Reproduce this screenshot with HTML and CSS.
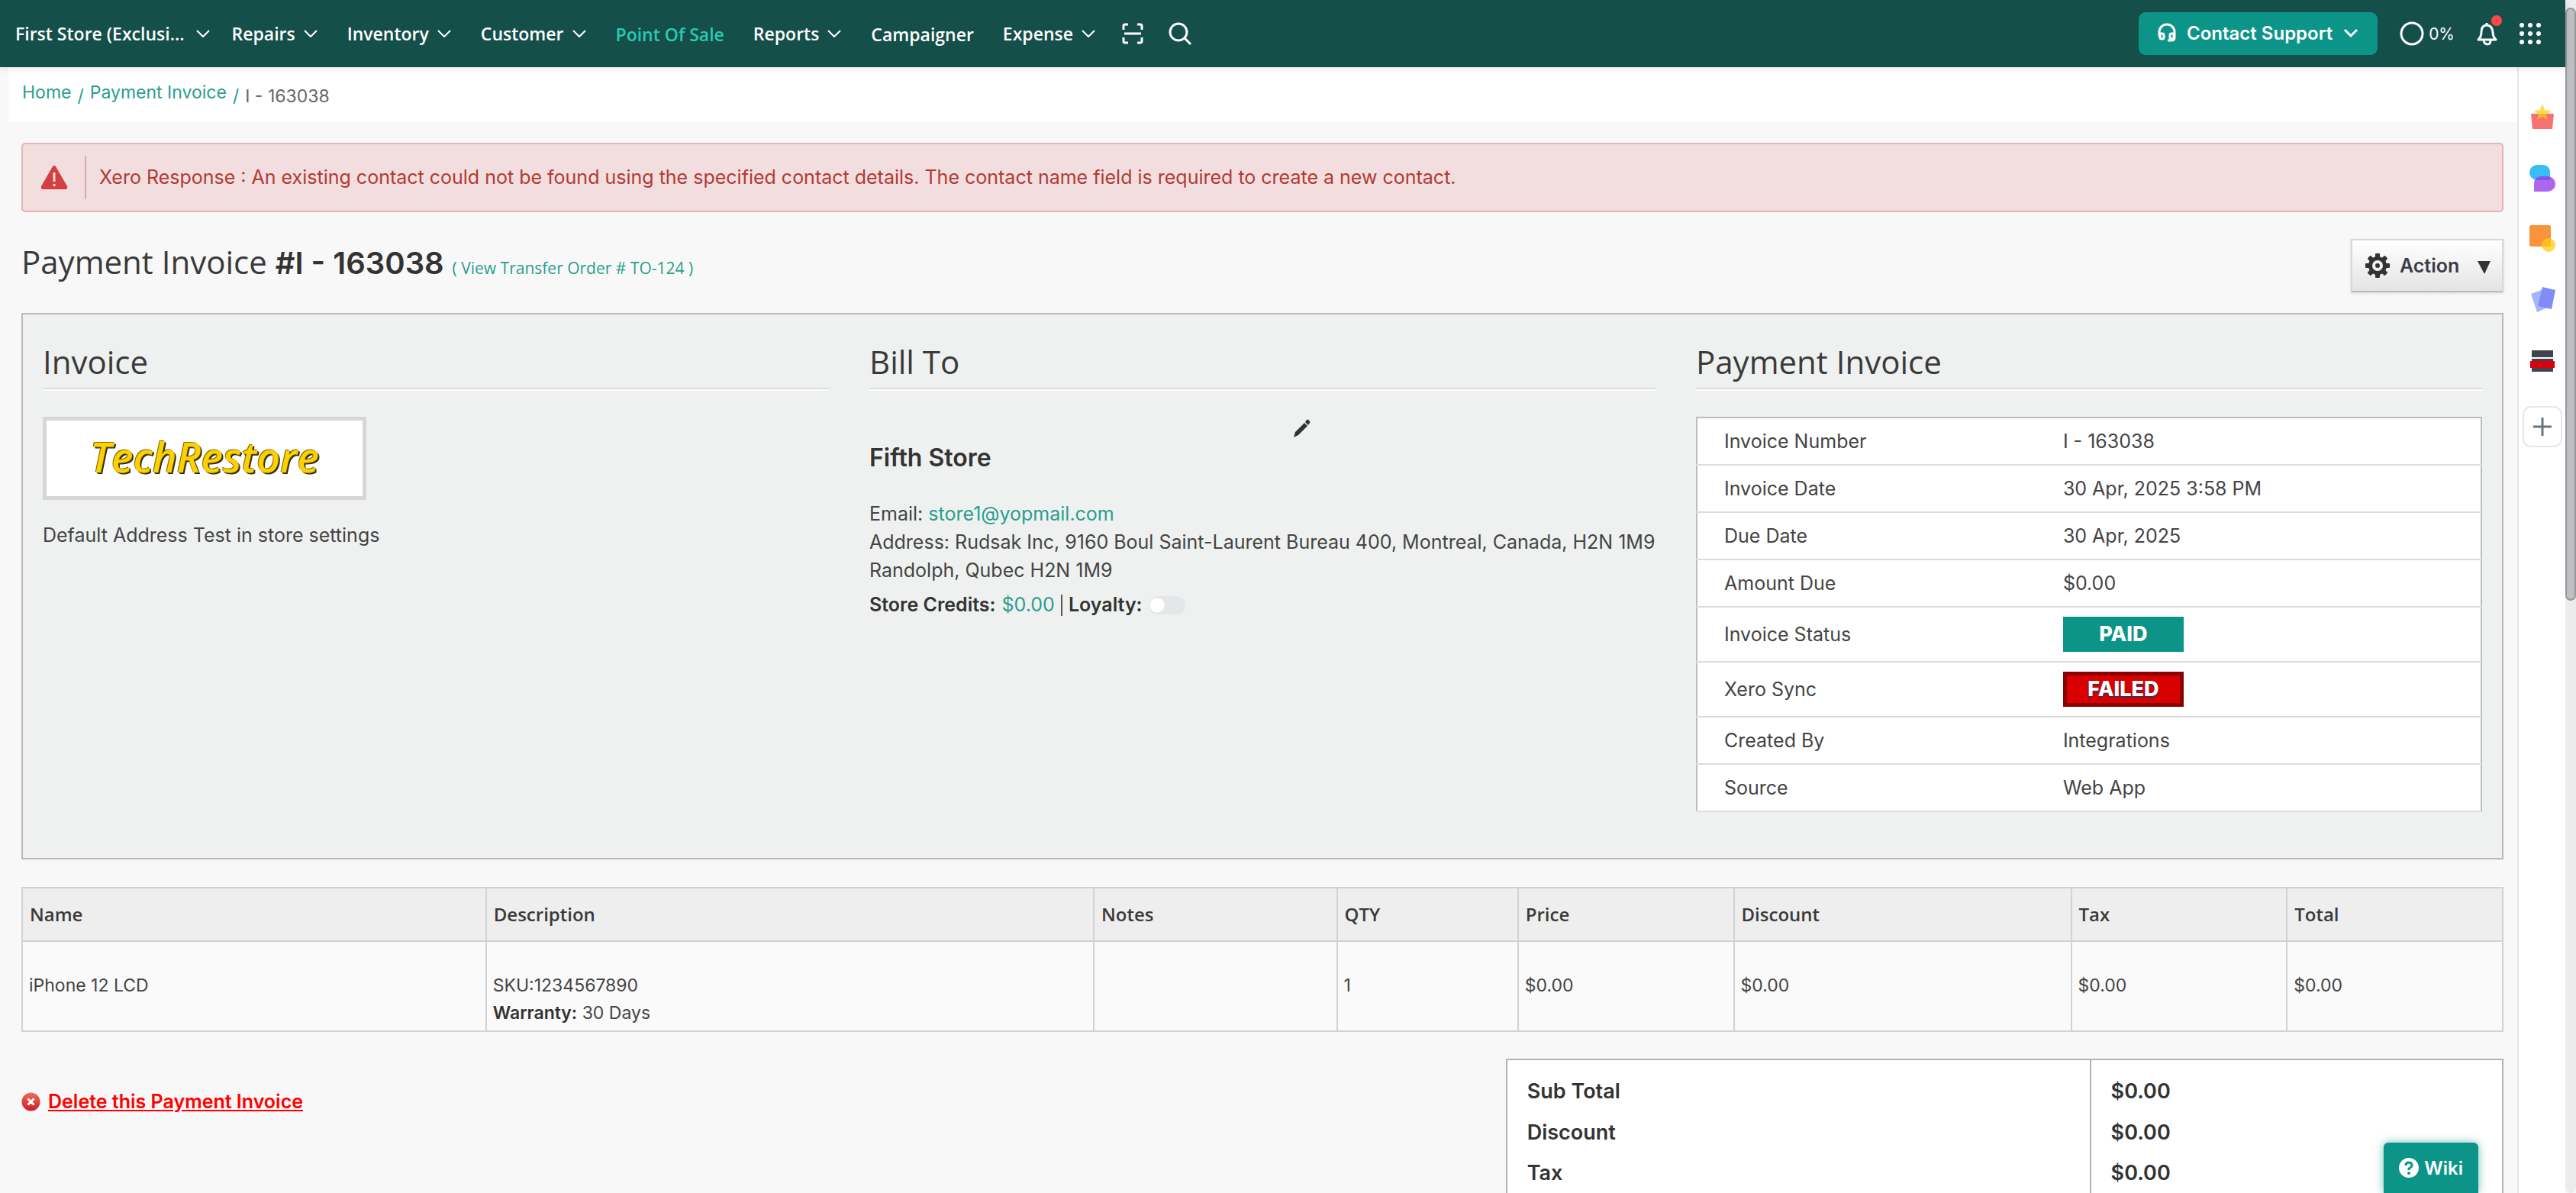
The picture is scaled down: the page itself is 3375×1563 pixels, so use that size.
FILE: index.html
```html
<!DOCTYPE html>
<html lang="en">
<head>
    <meta charset="UTF-8">
    <meta name="viewport" content="width=device-width, initial-scale=1.0">
    <title>Payment Invoice #I - 163038</title>
    <link rel="stylesheet" href="styles.css">
</head>
<body>
    <div class="app">
        <!-- Top navigation -->
        <header class="topbar">
            <nav class="nav">
                <button class="nav-item store">First Store (Exclusi... <svg class="chevron" viewBox="0 0 20 12"><path d="M2 2l8 8 8-8"/></svg></button>
                <button class="nav-item">Repairs <svg class="chevron" viewBox="0 0 20 12"><path d="M2 2l8 8 8-8"/></svg></button>
                <button class="nav-item">Inventory <svg class="chevron" viewBox="0 0 20 12"><path d="M2 2l8 8 8-8"/></svg></button>
                <button class="nav-item">Customer <svg class="chevron" viewBox="0 0 20 12"><path d="M2 2l8 8 8-8"/></svg></button>
                <a href="#" class="nav-item nav-link active">Point Of Sale</a>
                <button class="nav-item">Reports <svg class="chevron" viewBox="0 0 20 12"><path d="M2 2l8 8 8-8"/></svg></button>
                <a href="#" class="nav-item nav-link">Campaigner</a>
                <button class="nav-item">Expense <svg class="chevron" viewBox="0 0 20 12"><path d="M2 2l8 8 8-8"/></svg></button>
                <div class="nav-icons">
                    <button class="icon-btn" aria-label="Scan">
                        <svg width="28" height="28" viewBox="0 0 28 28"><path d="M2 9V4q0-2 2-2h4M20 2h4q2 0 2 2v5M26 19v5q0 2-2 2h-4M8 26H4q-2 0-2-2v-5M3 14h22"/></svg>
                    </button>
                    <button class="icon-btn" aria-label="Search">
                        <svg width="31" height="31" viewBox="0 0 31 31"><circle cx="13" cy="13" r="11"/><path d="M21 21l8 8"/></svg>
                    </button>
                </div>
            </nav>
            <div class="tools">
                <button class="support">
                    <svg width="24" height="26" viewBox="0 0 24 26"><path d="M2 18v-6a10 10 0 0 1 20 0v7q0 4-4 4h-5"/><path d="M3 14h3q2 0 2 2v3q0 2-2 2H5q-2 0-2-2zM21 14h-3q-2 0-2 2v3q0 2 2 2h1q2 0 2-2z"/></svg>
                    Contact Support
                    <svg class="chevron" viewBox="0 0 20 12"><path d="M2 2l8 8 8-8"/></svg>
                </button>
                <div class="progress">
                    <svg width="32" height="32" viewBox="0 0 32 32"><circle cx="16" cy="16" r="14"/></svg>
                    0%
                </div>
                <button class="icon-btn bell" aria-label="Notifications">
                    <svg width="27" height="32" viewBox="0 0 27 32"><path d="M2 24q4-4 4-10 0-9 7-9t8 9q0 6 4 10zM13 5V2M9 25q1 5 5 5t4-5"/></svg>
                    <span class="dot"></span>
                </button>
                <button class="icon-btn" aria-label="Apps">
                    <svg class="grid-icon" width="28" height="28" viewBox="0 0 28 28"><circle cx="3" cy="3" r="3"/><circle cx="14" cy="3" r="3"/><circle cx="25" cy="3" r="3"/><circle cx="3" cy="14" r="3"/><circle cx="14" cy="14" r="3"/><circle cx="25" cy="14" r="3"/><circle cx="3" cy="25" r="3"/><circle cx="14" cy="25" r="3"/><circle cx="25" cy="25" r="3"/></svg>
                </button>
            </div>
        </header>

        <div class="body">
            <main class="main">
                <div class="breadcrumb">
                    <a href="#">Home</a>
                    <span class="sep">/</span>
                    <a href="#">Payment Invoice</a>
                    <span class="sep">/</span>
                    <span class="current">I - 163038</span>
                </div>

                <div class="content">
                    <div class="alert">
                        <svg width="36" height="31" viewBox="0 0 36 31"><path d="M16 1q2-2 4 0l15 26q1 4-2 4H3q-3 0-2-4z" fill="#d43f42"/><path d="M16.500 9h3v12h-3zM16.500 24h3v3h-3z" fill="#f2dede"/></svg>
                        <div class="alert-text">Xero Response : An existing contact could not be found using the specified contact details. The contact name field is required to create a new contact.</div>
                    </div>

                    <div class="title-row">
                        <h1>Payment Invoice <b>#I - 163038</b> <a href="#">( View Transfer Order # TO-124 )</a></h1>
                        <button class="action">
                            <svg width="32" height="32" viewBox="0 0 32 32"><g fill="#333"><rect x="13" y="0" width="6" height="32" rx="1"/><rect x="13" y="0" width="6" height="32" rx="1" transform="rotate(45 16 16)"/><rect x="13" y="0" width="6" height="32" rx="1" transform="rotate(90 16 16)"/><rect x="13" y="0" width="6" height="32" rx="1" transform="rotate(135 16 16)"/><circle cx="16" cy="16" r="12"/></g><circle cx="16" cy="16" r="7" fill="#f4f4f4"/><circle cx="16" cy="16" r="3" fill="#333"/></svg>
                            <span>Action</span>
                            <svg width="17" height="21" viewBox="0 0 17 21"><path d="M0 4h17L9 21z" fill="#333"/></svg>
                        </button>
                    </div>

                    <!-- Invoice details -->
                    <section class="panel">
                        <div class="col">
                            <h2>Invoice</h2>
                            <div class="logo">TechRestore</div>
                            <p class="store-address">Default Address Test in store settings</p>
                        </div>

                        <div class="col">
                            <h2>Bill To</h2>
                            <button class="edit" aria-label="Edit customer">
                                <svg width="22" height="24" viewBox="0 0 22 24"><path d="M0 24l2-7L14 5l4 4L6 21zM15 4l2-3q1-1 2 0l2 2q1 1 0 2l-2 3z" fill="#333"/></svg>
                            </button>
                            <h3>Fifth Store</h3>
                            <div>Email: <a href="#">store1@yopmail.com</a></div>
                            <div class="address">Address: Rudsak Inc, 9160 Boul Saint-Laurent Bureau 400, Montreal, Canada, H2N 1M9</div>
                            <div>Randolph, Qubec H2N 1M9</div>
                            <div class="credits">
                                <b>Store Credits:</b>
                                <a href="#">$0.00</a>
                                <span class="divider"></span>
                                <label for="loyalty">Loyalty:</label>
                                <input type="checkbox" id="loyalty" class="toggle">
                            </div>
                        </div>

                        <div class="col">
                            <h2>Payment Invoice</h2>
                            <table class="details">
                                <tr><th scope="row">Invoice Number</th><td>I - 163038</td></tr>
                                <tr><th scope="row">Invoice Date</th><td>30 Apr, 2025 3:58 PM</td></tr>
                                <tr><th scope="row">Due Date</th><td>30 Apr, 2025</td></tr>
                                <tr><th scope="row">Amount Due</th><td>$0.00</td></tr>
                                <tr class="tall"><th scope="row">Invoice Status</th><td><span class="badge paid">PAID</span></td></tr>
                                <tr class="tall"><th scope="row">Xero Sync</th><td><span class="badge failed">FAILED</span></td></tr>
                                <tr><th scope="row">Created By</th><td>Integrations</td></tr>
                                <tr><th scope="row">Source</th><td>Web App</td></tr>
                            </table>
                        </div>
                    </section>

                    <!-- Line items -->
                    <table class="items">
                        <colgroup>
                            <col class="c-name"><col class="c-desc"><col class="c-notes"><col class="c-qty">
                            <col class="c-price"><col class="c-discount"><col class="c-tax"><col>
                        </colgroup>
                        <thead>
                            <tr><th>Name</th><th>Description</th><th>Notes</th><th>QTY</th><th>Price</th><th>Discount</th><th>Tax</th><th>Total</th></tr>
                        </thead>
                        <tbody>
                            <tr>
                                <td>iPhone 12 LCD</td>
                                <td>SKU:1234567890<br><b>Warranty:</b> 30 Days</td>
                                <td></td>
                                <td>1</td>
                                <td>$0.00</td>
                                <td>$0.00</td>
                                <td>$0.00</td>
                                <td>$0.00</td>
                            </tr>
                        </tbody>
                    </table>

                    <div class="bottom">
                        <a href="#" class="delete">
                            <svg width="25" height="25" viewBox="0 0 25 25"><defs><linearGradient id="red" x1="0" y1="0" x2="0" y2="1"><stop offset="0" stop-color="#e8705c"/><stop offset="1" stop-color="#d11a24"/></linearGradient></defs><circle cx="12.500" cy="12.500" r="12" fill="url(#red)"/><path d="M8.500 8.500l8 8M16.500 8.500l-8 8" stroke="#fff" stroke-width="3"/></svg>
                            <span>Delete this Payment Invoice</span>
                        </a>
                        <table class="totals">
                            <tr><th scope="row">Sub Total</th><td>$0.00</td></tr>
                            <tr><th scope="row">Discount</th><td>$0.00</td></tr>
                            <tr><th scope="row">Tax</th><td>$0.00</td></tr>
                        </table>
                    </div>
                </div>
            </main>

            <!-- App shortcuts -->
            <aside class="rail">
                <button aria-label="Rewards"><svg width="36" height="36" viewBox="0 0 36 36"><path d="M3 14h30l-2 20H5z" fill="#f87171"/><path d="M18 1l3 8 8 1-6 5 2 7-7-4-7 4 2-7-6-5 8-1z" fill="#facc15" fill-opacity=".75"/></svg></button>
                <button aria-label="Chat"><svg width="36" height="36" viewBox="0 0 36 36"><path d="M11 1h8a9 9 0 0 1 9 9v11H11a10 10 0 0 1 0-20z" fill="#38bdf8"/><path d="M17 16h8a10 10 0 0 1 0 20H7V26q0-10 10-10z" fill="#9333ea" fill-opacity=".75"/></svg></button>
                <button aria-label="Notes"><svg width="36" height="36" viewBox="0 0 36 36"><rect x="1" y="0" width="28" height="28" rx="2" fill="#fb923c"/><circle cx="26" cy="26" r="9" fill="#facc15" fill-opacity=".75"/></svg></button>
                <button aria-label="Cards"><svg width="36" height="36" viewBox="0 0 36 36"><path d="M3 10l16-6 8 23-16 7z" fill="#a5b4fc"/><path d="M18 1l17 4-5 25-18-4z" fill="#818cf8"/></svg></button>
                <button aria-label="Registers"><svg width="36" height="36" viewBox="0 0 36 36"><path d="M4 4h28v9H4zM4 15h28v3H4zM4 27h28v5H4z" fill="#3f444f"/><rect x="2" y="18" width="32" height="9" fill="#d9000d"/></svg></button>
                <button class="add" aria-label="Add"><svg width="24" height="24" viewBox="0 0 24 24"><path d="M12 0v24M0 12h24" stroke="#6b7280" stroke-width="3"/></svg></button>
            </aside>
        </div>

        <button class="wiki">
            <svg width="26" height="26" viewBox="0 0 26 26"><circle cx="13" cy="13" r="13" fill="#fff"/><path d="M9 10q0-4 4-4t4 4q0 2-4 4v2" fill="none" stroke="#0d9488" stroke-width="3"/><circle cx="13" cy="20" r="2" fill="#0d9488"/></svg>
            Wiki
        </button>
    </div>
    <div class="scrollbar"><div class="thumb"></div></div>
</body>
</html>
```
FILE: styles.css
```css
* {
    box-sizing: border-box;
}

body {
    margin: 0;
    display: flex;
    height: 100vh;
    overflow: hidden;
    background-color: #f8f8f8;
    color: #444;
    font-family: Inter, "Liberation Sans", sans-serif;
    font-size: 25px;
    line-height: 37px;
}

a {
    color: #2a9d8f;
    text-decoration: none;
}

b {
    font-weight: 600;
    color: #333;
}

button {
    font-family: inherit;
    font-size: inherit;
    line-height: inherit;
    color: inherit;
    background: none;
    border: none;
    padding: 0;
    cursor: pointer;
}

svg {
    flex: none;
}

.app {
    flex: 1;
    min-width: 0;
    position: relative;
    display: flex;
    flex-direction: column;
}

/* Top navigation */
.topbar {
    flex: none;
    height: 88px;
    display: flex;
    justify-content: space-between;
    align-items: center;
    padding: 0 32px 0 20px;
    background-color: #154f4a;
    color: #fff;
    box-shadow: 0 2px 8px rgba(0, 0, 0, 0.1);
    position: relative;
}

.nav {
    display: flex;
    align-items: center;
    gap: 38px;
}

.nav-item {
    display: flex;
    align-items: center;
    gap: 10px;
    color: #fff;
    font-family: "Open Sans", sans-serif;
    font-size: 23px;
    font-weight: 600;
    white-space: nowrap;
}

.nav-item.store {
    gap: 14px;
    margin-right: -10px;
}

.nav-link {
    padding-top: 3px;
}

.nav-item.active {
    color: #2cc9b2;
}

.chevron {
    width: 20px;
    height: 12px;
}

.topbar svg {
    fill: none;
    stroke: #fff;
    stroke-width: 3;
    stroke-linejoin: round;
}

.topbar .nav-item svg {
    stroke-width: 2;
}

.topbar .grid-icon {
    fill: #fff;
    stroke: none;
}

.nav-icons {
    display: flex;
    align-items: center;
    gap: 33px;
    margin-left: -4px;
}

.icon-btn {
    display: flex;
}

.tools {
    display: flex;
    align-items: center;
    gap: 29px;
}

.support {
    display: flex;
    align-items: center;
    gap: 14px;
    height: 56px;
    padding: 0 25px 2px;
    border-radius: 9px;
    background-color: #0d9488;
    font-size: 24px;
    font-weight: 600;
}

.progress {
    display: flex;
    align-items: center;
    gap: 6px;
    font-size: 21px;
}

.bell {
    position: relative;
}

.dot {
    position: absolute;
    top: -8px;
    right: -6px;
    width: 14px;
    height: 14px;
    border-radius: 50%;
    background-color: #ff4747;
}

/* Page */
.body {
    flex: 1;
    min-height: 0;
    display: flex;
}

.main {
    flex: 1;
    min-width: 0;
}

.breadcrumb {
    display: flex;
    gap: 8px;
    height: 72px;
    margin-left: 11px;
    padding: 15px 18px;
    background-color: #fff;
    font-size: 23px;
}

.breadcrumb .sep,
.breadcrumb .current {
    padding-top: 5px;
}

.breadcrumb .sep {
    color: #2a9d8f;
}

.breadcrumb .current {
    color: #666;
}

.content {
    padding: 27px 18px 0 28px;
}

.alert {
    display: flex;
    align-items: center;
    height: 91px;
    padding-left: 23px;
    border: 2px solid #e3b5b6;
    border-radius: 5px;
    background-color: #f2dede;
    color: #b13a33;
}

.alert-text {
    margin-left: 22px;
    padding: 10px 0 10px 17px;
    border-left: 2px solid #dca7a7;
}

.title-row {
    display: flex;
    justify-content: space-between;
    margin: 35px 0 27px;
}

h1, h2 {
    margin: 0;
    color: #3a3a3a;
    font-family: "Open Sans", sans-serif;
    font-size: 42px;
    font-weight: 400;
    line-height: 60px;
}

h1 b {
    font-family: Inter, sans-serif;
    font-size: 40px;
}

h1 a {
    font-size: 21px;
}

.action {
    display: flex;
    align-items: center;
    gap: 13px;
    width: 200px;
    height: 70px;
    padding: 0 15px 0 17px;
    border: 2px solid #d8d8d8;
    border-bottom-color: #bdbdbd;
    background: linear-gradient(#fff, #e4e4e4);
    color: #3c3c46;
    font-weight: 600;
    box-shadow: 0 1px 3px rgba(0, 0, 0, 0.15);
}

.action span {
    flex: 1;
    text-align: left;
}

/* Invoice details */
.panel {
    display: grid;
    grid-template-columns: repeat(3, 1fr);
    gap: 53px;
    padding: 32px 26px 60px;
    border: 2px solid #b9bbbb;
    background-color: #eff1f0;
}

.col {
    min-width: 0;
    position: relative;
}

h2 {
    padding-bottom: 4px;
    margin-bottom: 36px;
    border-bottom: 2px solid #dcdcdc;
    box-shadow: 0 2px #fff;
}

.logo {
    display: flex;
    align-items: center;
    justify-content: center;
    width: 424px;
    height: 109px;
    padding-bottom: 4px;
    border: 5px solid #d6d6d6;
    background-color: #fff;
    color: #fdd000;
    font-family: "Open Sans", sans-serif;
    font-size: 54px;
    font-weight: 600;
    font-style: italic;
    text-shadow: 1px 1px #5a4a00, 2px 2px #222, -1px -1px #8a7000;
}

.store-address {
    margin: 28px 0 0;
}

.edit {
    display: flex;
    position: absolute;
    top: 105px;
    left: 54%;
}

h3 {
    margin: 34px 0 37px;
    padding: 35px 0 0;
    color: #333;
    font-size: 32px;
    font-weight: 600;
}

.address {
    white-space: nowrap;
}

.credits {
    display: flex;
    align-items: center;
    gap: 8px;
    margin-top: 8px;
}

.divider {
    width: 2px;
    height: 28px;
    background-color: #555;
}

.credits label {
    color: #333;
    font-weight: 600;
}

.toggle {
    appearance: none;
    width: 48px;
    height: 24px;
    margin: 0;
    border-radius: 12px;
    background: radial-gradient(circle at 11px 12px, #fff 9px, #e4e6ea 10px);
}

table {
    border-collapse: collapse;
}

th {
    text-align: left;
}

.details {
    width: 100%;
    background-color: #fff;
    border: 2px solid #bcbebe;
}

.details th,
.details td {
    height: 62px;
    padding: 0 0 0 7px;
    border-bottom: 2px solid #dcdcdc;
    font-weight: 400;
}

.details th {
    width: 46%;
    padding-left: 35px;
}

.details .tall td {
    height: 72px;
}

.badge {
    display: block;
    width: 158px;
    height: 46px;
    color: #fff;
    font-size: 27px;
    font-weight: 800;
    line-height: 46px;
    text-align: center;
}

.paid {
    background-color: #0d9488;
}

.failed {
    border: 5px solid #8b0000;
    background-color: #d80000;
    line-height: 36px;
    text-shadow: 0 2px 2px #335;
}

/* Line items */
.items {
    width: 100%;
    table-layout: fixed;
    margin-top: 36px;
    font-size: 23px;
    line-height: 36px;
}

.items th,
.items td {
    border: 2px solid #d2d2d2;
    padding: 0 9px;
}

.items th {
    height: 70px;
    background-color: #eee;
    color: #3a3a3a;
    font-family: "Open Sans", sans-serif;
    font-size: 24px;
    font-weight: 600;
}

.items td {
    height: 118px;
    padding: 39px 8px 0;
    background-color: #fafafa;
    vertical-align: top;
}

.c-name { width: 18.7%; }
.c-desc { width: 24.5%; }
.c-notes { width: 9.8%; }
.c-qty { width: 7.3%; }
.c-price { width: 8.7%; }
.c-discount { width: 13.6%; }
.c-tax { width: 8.7%; }

.bottom {
    display: flex;
    justify-content: space-between;
    align-items: flex-start;
    margin-top: 35px;
}

.delete {
    display: flex;
    align-items: center;
    gap: 10px;
    margin-top: 38px;
    color: #f00;
    font-weight: 600;
}

.delete span {
    text-decoration: underline;
}

.totals {
    width: 40.2%;
    background-color: #fff;
    border: 2px solid #b3b3b3;
    color: #333;
    font-size: 27px;
    font-weight: 600;
}

.totals th,
.totals td {
    height: 54px;
    padding: 0 26px;
    font-weight: 600;
}

.totals th {
    width: 58.6%;
    border-right: 2px solid #b3b3b3;
}

.totals tr:first-child th,
.totals tr:first-child td {
    height: 68px;
    padding-top: 14px;
}

/* App shortcuts */
.rail {
    display: flex;
    flex-direction: column;
    align-items: center;
    gap: 44px;
    width: 63px;
    padding-top: 47px;
    border-left: 2px solid #e8e8ec;
    background-color: #fff;
}

.rail button {
    display: flex;
    align-items: center;
    justify-content: center;
}

.rail .add {
    width: 52px;
    height: 54px;
    margin-top: -3px;
    border: 2px solid #e5e7eb;
    border-radius: 11px;
}

.wiki {
    display: flex;
    align-items: center;
    gap: 7px;
    position: absolute;
    right: 114px;
    bottom: 0;
    height: 66px;
    padding: 0 20px;
    border-radius: 6px 6px 0 0;
    background-color: #0d9488;
    color: #fff;
    font-size: 24px;
    font-weight: 600;
    box-shadow: 0 0 12px rgba(13, 148, 136, 0.6);
}

.scrollbar {
    width: 14px;
    padding-top: 10px;
    border-radius: 0 0 7px 7px;
    background-color: #ececee;
}

.thumb {
    height: 50%;
    border: 2px solid #98989a;
    border-radius: 7px;
    background-color: #bfbfc3;
}
```
